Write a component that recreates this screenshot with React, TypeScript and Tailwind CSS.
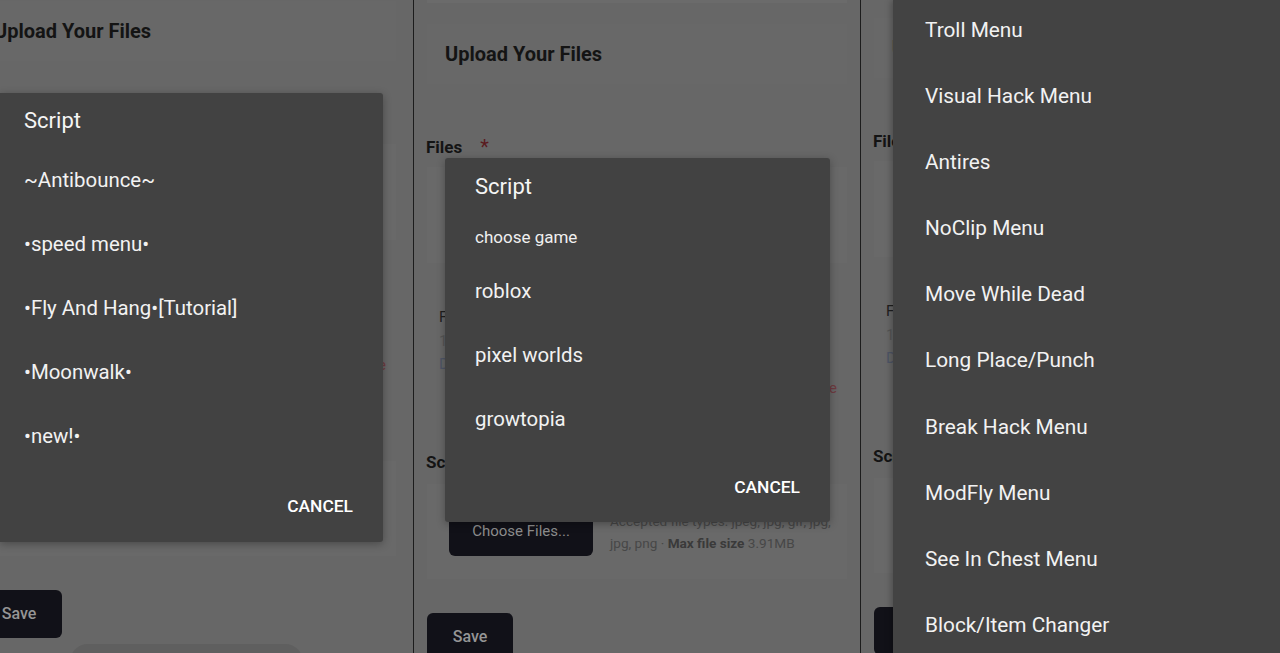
import React from 'react';

const scriptItems = ['~Antibounce~', '•speed menu•', '•Fly And Hang•[Tutorial]', '•Moonwalk•', '•new!•'];
const games = ['roblox', 'pixel worlds', 'growtopia'];
const menuItems = [
  'Troll Menu',
  'Visual Hack Menu',
  'Antires',
  'NoClip Menu',
  'Move While Dead',
  'Long Place/Punch',
  'Break Hack Menu',
  'ModFly Menu',
  'See In Chest Menu',
  'Block/Item Changer',
];

// The dimmed upload form that sits behind every dialog
function UploadPage({ shift }: { shift: string }) {
  return (
    <div className={`w-[446px] shrink-0 flex flex-col ${shift}`}>
      <div className="h-[3px] mx-[13px] bg-[#6b6b6b]" />
      <div className="mt-[21px] h-[60px] mx-[13px] bg-[#686868] flex items-center pl-[18px]">
        <h2 className="text-[20px] font-bold text-[#141414]">Upload Your Files</h2>
      </div>

      <div className="mt-[51px] ml-[12px] flex items-center leading-[24px]">
        <span className="text-[17px] font-bold text-[#141414]">Files</span>
        <span className="ml-[18px] text-[20px] text-[#5a1a1e]">*</span>
      </div>
      <div className="mt-[8px] h-[96px] mx-[13px] bg-[#696969]" />

      <div className="mt-[43px] pl-[25px] pr-[23px] text-[15px] leading-[23.5px]">
        <p className="text-[#1f1f1f]">File requirements</p>
        <p className="text-[#555]">1 file max · 3.91MB</p>
        <p className="text-[#4e5566]">Drop files here</p>
        <p className="text-right text-[#6e3a40]">Remove</p>
      </div>

      <div className="mt-[50px] ml-[12px] leading-[24px]">
        <span className="text-[17px] font-bold text-[#141414]">Screenshots</span>
      </div>
      <div className="mt-[9px] h-[95px] mx-[13px] bg-[#696969] flex items-center px-[22px] gap-[17px]">
        <div className="w-[144px] h-[48px] shrink-0 rounded-md bg-[#111118] flex items-center justify-center text-[15px] text-[#8c8c8c]">
          Choose Files...
        </div>
        <div className="text-[13.6px] leading-[22px] text-[#474747] whitespace-nowrap">
          <p>Accepted file types: jpeg, jpg, gif, jpg,</p>
          <p>
            jpg, png · <span className="font-bold text-[#3a3a3a]">Max file size</span> 3.91MB
          </p>
        </div>
      </div>

      <div className="mt-[34px] ml-[13px] w-[86px] h-[48px] rounded-md bg-[#111118] flex items-center justify-center text-[16px] font-medium text-[#959595]">
        Save
      </div>
      <div className="mt-[6px] ml-[107px] w-[233px] h-[40px] rounded-[18px] bg-[#5f5f5f]" />
    </div>
  );
}

export default function App() {
  return (
    <div className="w-[1280px] h-[653px] overflow-hidden flex bg-[#676767] font-['Roboto',sans-serif]">
      {/* Panel 1 */}
      <div className="relative w-[413px] h-full overflow-hidden shrink-0">
        <UploadPage shift="-ml-[37px] -mt-[23px]" />
        <div className="absolute left-0 top-[93px] w-[383px] h-[449px] bg-[#424242] rounded-r-[3px] shadow-[0_2px_8px_rgba(0,0,0,0.3)] flex flex-col pl-[24px] pt-[14px]">
          <h3 className="text-[22px] leading-[28px] text-[#f5f5f5]">Script</h3>
          <div className="mt-[13px] flex flex-col">
            {scriptItems.map((item) => (
              <div key={item} className="h-[64px] flex items-center text-[20.4px] text-[#f2f2f2]">
                {item}
              </div>
            ))}
          </div>
          <div className="mt-[19px] h-[38px] flex items-center justify-end pr-[30px] text-[17.4px] font-medium text-white">
            CANCEL
          </div>
        </div>
      </div>
      <div className="w-px h-full bg-[#1c1c1c] shrink-0" />

      {/* Panel 2 */}
      <div className="relative w-[446px] h-full overflow-hidden shrink-0">
        <UploadPage shift="" />
        <div className="absolute left-[31px] top-[158px] w-[385px] h-[364px] bg-[#424242] rounded-[3px] shadow-[0_2px_8px_rgba(0,0,0,0.3)] flex flex-col pl-[30px] pt-[15px]">
          <h3 className="text-[22px] leading-[28px] text-[#f5f5f5]">Script</h3>
          <p className="mt-[24px] text-[17px] leading-[24px] text-[#f0f0f0]">choose game</p>
          <div className="mt-[10px] flex flex-col">
            {games.map((g) => (
              <div key={g} className="h-[64px] flex items-center text-[20.4px] text-[#f2f2f2]">
                {g}
              </div>
            ))}
          </div>
          <div className="mt-[17px] h-[38px] flex items-center justify-end pr-[30px] text-[17.4px] font-medium text-white">
            CANCEL
          </div>
        </div>
      </div>
      <div className="w-px h-full bg-[#1c1c1c] shrink-0" />

      {/* Panel 3 */}
      <div className="relative flex-1 h-full overflow-hidden">
        <UploadPage shift="-mt-[6px]" />
        <div className="absolute left-[32px] top-0 bottom-0 right-0 bg-[#434343] shadow-[-2px_0_6px_rgba(0,0,0,0.25)] pl-[32px]">
          <div className="-mt-[3px] flex flex-col">
            {menuItems.map((m) => (
              <div key={m} className="h-[66.2px] flex items-center text-[20.8px] text-[#f2f2f2]">
                {m}
              </div>
            ))}
          </div>
        </div>
      </div>
    </div>
  );
}
